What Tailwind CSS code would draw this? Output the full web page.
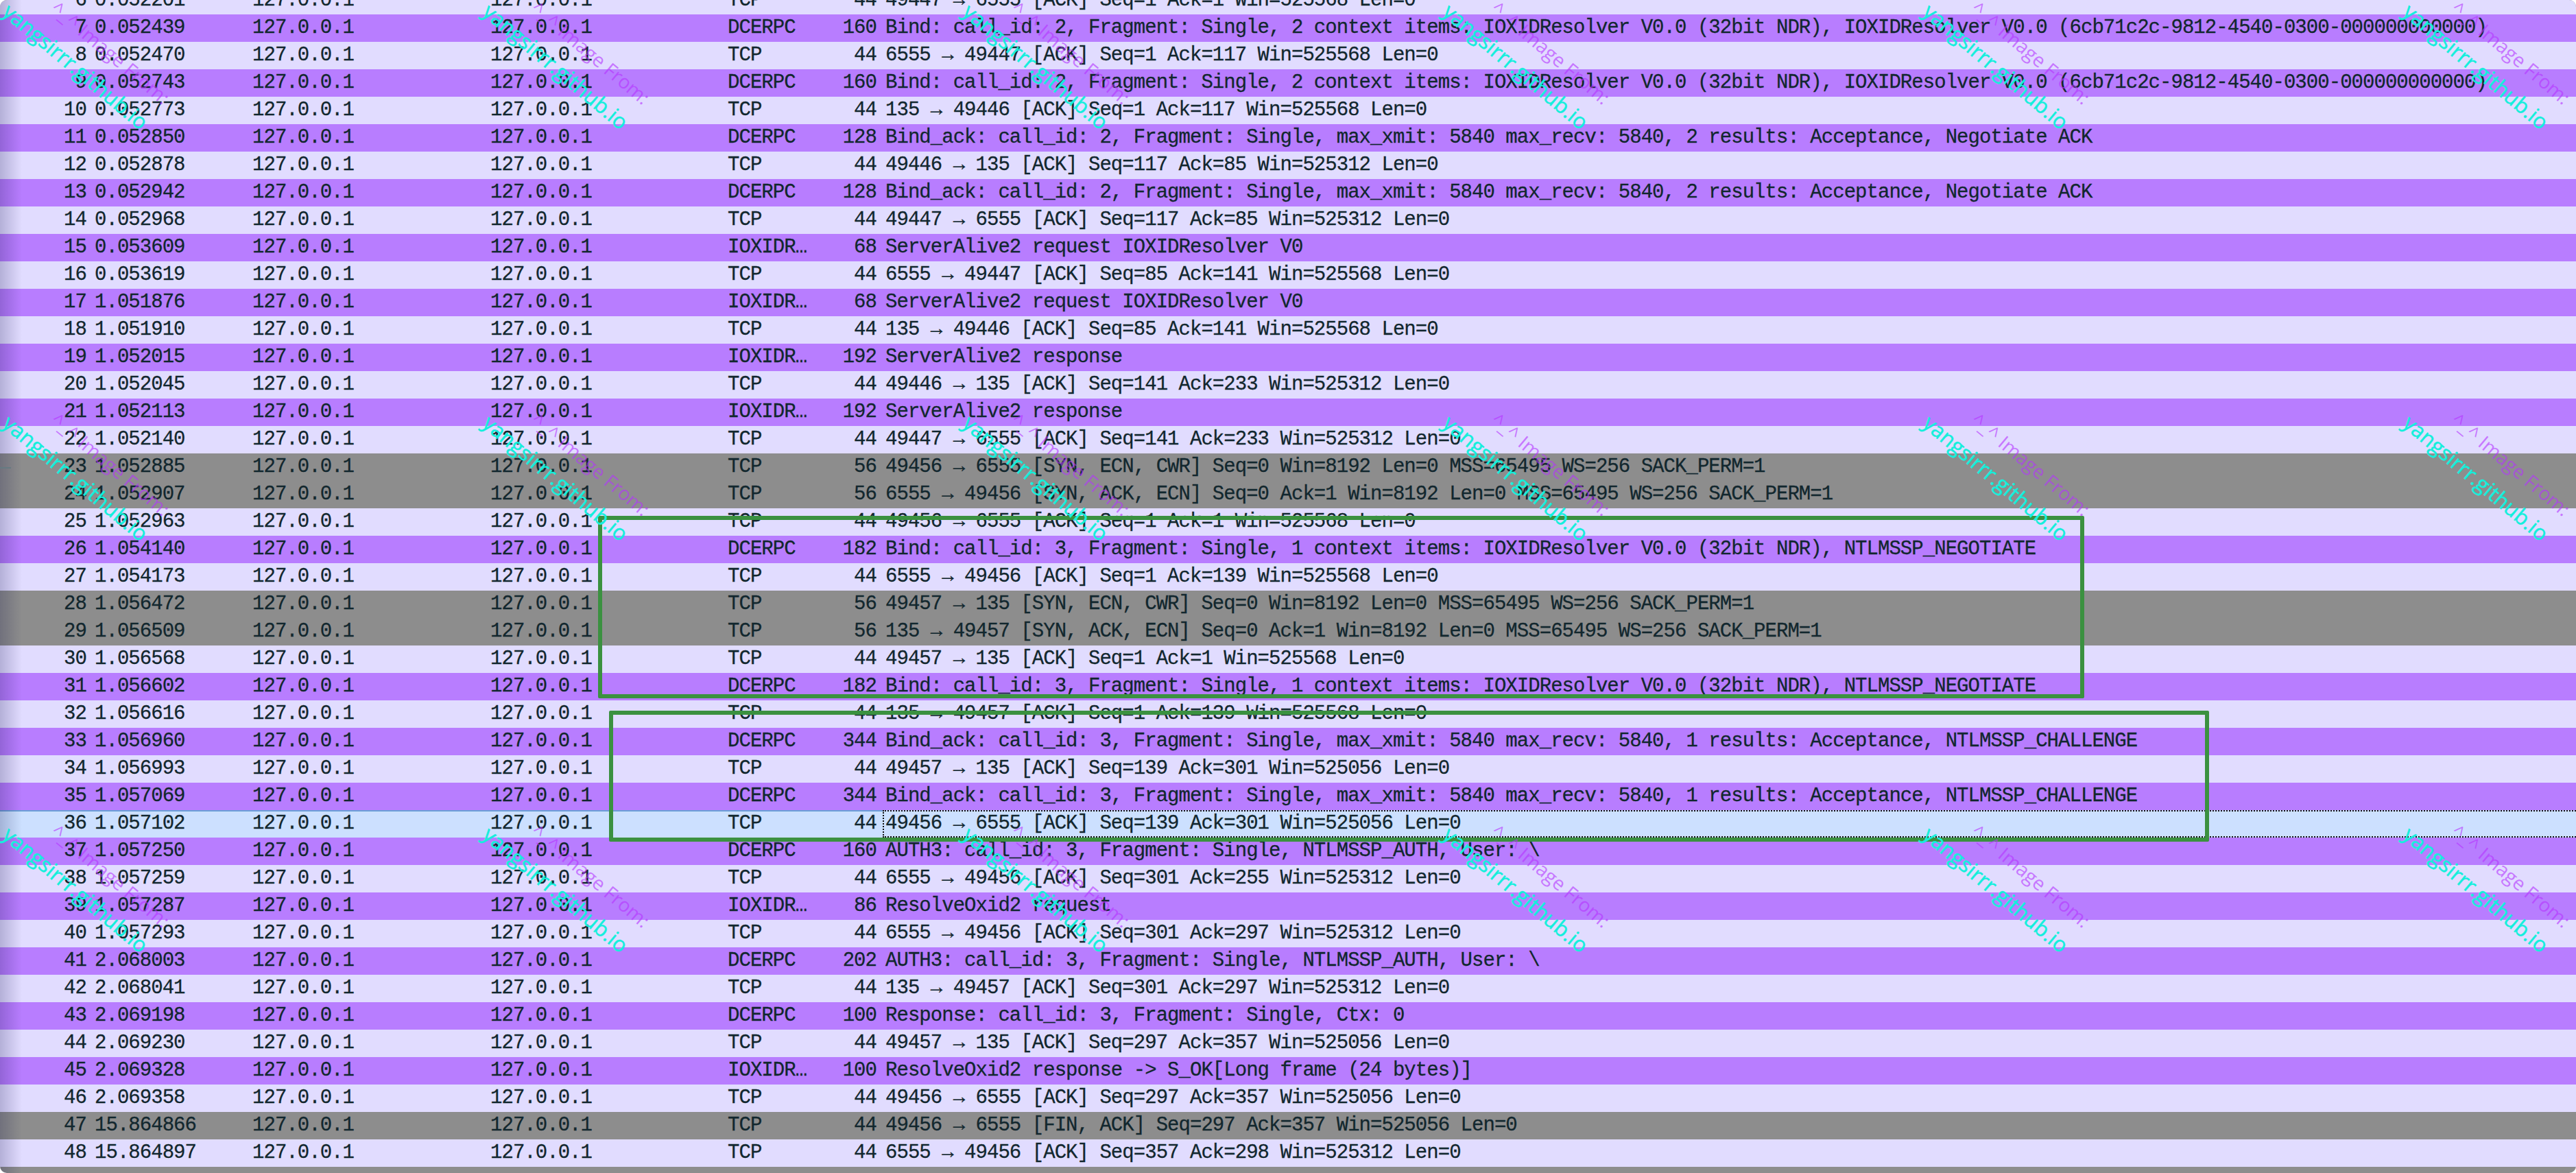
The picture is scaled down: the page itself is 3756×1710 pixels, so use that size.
<!DOCTYPE html>
<html>
<head>
<meta charset="utf-8">
<script src="https://cdn.jsdelivr.net/npm/@tailwindcss/browser@4"></script>
</head>
<body class="bg-white">
<div class="relative w-[3756px] h-[1710px] overflow-hidden rounded-[10px] bg-[#8d8d8d]">
<table class="w-[3756px] table-fixed border-collapse -mt-[19px] bg-[#e1dcff] text-[#12272e] font-['Liberation_Mono',monospace] text-[29px] tracking-[-0.96px] [-webkit-text-stroke:0.3px_#12272e] leading-[40px] whitespace-pre [&_tr]:h-[40px] [&_td]:p-0 [&_td]:overflow-hidden [&_td:nth-child(1)]:text-right [&_td:nth-child(1)]:pr-[6px] [&_td:nth-child(2)]:pl-[6px] [&_td:nth-child(3)]:pl-[6px] [&_td:nth-child(4)]:pl-[6px] [&_td:nth-child(5)]:pl-[6px] [&_td:nth-child(6)]:text-right [&_td:nth-child(6)]:pr-[9px] [&_td:nth-child(7)]:pl-[4px]">
<colgroup><col class="w-[132px]"><col class="w-[230px]"><col class="w-[347px]"><col class="w-[346px]"><col class="w-[160px]"><col class="w-[72px]"><col></colgroup>
<tbody>
<tr><td>6</td><td>0.052201</td><td>127.0.0.1</td><td>127.0.0.1</td><td>TCP</td><td>44</td><td>49447 → 6555 [ACK] Seq=1 Ack=1 Win=525568 Len=0</td></tr>
<tr class="bg-[#b87dff]"><td>7</td><td>0.052439</td><td>127.0.0.1</td><td>127.0.0.1</td><td>DCERPC</td><td>160</td><td>Bind: call_id: 2, Fragment: Single, 2 context items: IOXIDResolver V0.0 (32bit NDR), IOXIDResolver V0.0 (6cb71c2c-9812-4540-0300-000000000000)</td></tr>
<tr><td>8</td><td>0.052470</td><td>127.0.0.1</td><td>127.0.0.1</td><td>TCP</td><td>44</td><td>6555 → 49447 [ACK] Seq=1 Ack=117 Win=525568 Len=0</td></tr>
<tr class="bg-[#b87dff]"><td>9</td><td>0.052743</td><td>127.0.0.1</td><td>127.0.0.1</td><td>DCERPC</td><td>160</td><td>Bind: call_id: 2, Fragment: Single, 2 context items: IOXIDResolver V0.0 (32bit NDR), IOXIDResolver V0.0 (6cb71c2c-9812-4540-0300-000000000000)</td></tr>
<tr><td>10</td><td>0.052773</td><td>127.0.0.1</td><td>127.0.0.1</td><td>TCP</td><td>44</td><td>135 → 49446 [ACK] Seq=1 Ack=117 Win=525568 Len=0</td></tr>
<tr class="bg-[#b87dff]"><td>11</td><td>0.052850</td><td>127.0.0.1</td><td>127.0.0.1</td><td>DCERPC</td><td>128</td><td>Bind_ack: call_id: 2, Fragment: Single, max_xmit: 5840 max_recv: 5840, 2 results: Acceptance, Negotiate ACK</td></tr>
<tr><td>12</td><td>0.052878</td><td>127.0.0.1</td><td>127.0.0.1</td><td>TCP</td><td>44</td><td>49446 → 135 [ACK] Seq=117 Ack=85 Win=525312 Len=0</td></tr>
<tr class="bg-[#b87dff]"><td>13</td><td>0.052942</td><td>127.0.0.1</td><td>127.0.0.1</td><td>DCERPC</td><td>128</td><td>Bind_ack: call_id: 2, Fragment: Single, max_xmit: 5840 max_recv: 5840, 2 results: Acceptance, Negotiate ACK</td></tr>
<tr><td>14</td><td>0.052968</td><td>127.0.0.1</td><td>127.0.0.1</td><td>TCP</td><td>44</td><td>49447 → 6555 [ACK] Seq=117 Ack=85 Win=525312 Len=0</td></tr>
<tr class="bg-[#b87dff]"><td>15</td><td>0.053609</td><td>127.0.0.1</td><td>127.0.0.1</td><td>IOXIDR…</td><td>68</td><td>ServerAlive2 request IOXIDResolver V0</td></tr>
<tr><td>16</td><td>0.053619</td><td>127.0.0.1</td><td>127.0.0.1</td><td>TCP</td><td>44</td><td>6555 → 49447 [ACK] Seq=85 Ack=141 Win=525568 Len=0</td></tr>
<tr class="bg-[#b87dff]"><td>17</td><td>1.051876</td><td>127.0.0.1</td><td>127.0.0.1</td><td>IOXIDR…</td><td>68</td><td>ServerAlive2 request IOXIDResolver V0</td></tr>
<tr><td>18</td><td>1.051910</td><td>127.0.0.1</td><td>127.0.0.1</td><td>TCP</td><td>44</td><td>135 → 49446 [ACK] Seq=85 Ack=141 Win=525568 Len=0</td></tr>
<tr class="bg-[#b87dff]"><td>19</td><td>1.052015</td><td>127.0.0.1</td><td>127.0.0.1</td><td>IOXIDR…</td><td>192</td><td>ServerAlive2 response</td></tr>
<tr><td>20</td><td>1.052045</td><td>127.0.0.1</td><td>127.0.0.1</td><td>TCP</td><td>44</td><td>49446 → 135 [ACK] Seq=141 Ack=233 Win=525312 Len=0</td></tr>
<tr class="bg-[#b87dff]"><td>21</td><td>1.052113</td><td>127.0.0.1</td><td>127.0.0.1</td><td>IOXIDR…</td><td>192</td><td>ServerAlive2 response</td></tr>
<tr><td>22</td><td>1.052140</td><td>127.0.0.1</td><td>127.0.0.1</td><td>TCP</td><td>44</td><td>49447 → 6555 [ACK] Seq=141 Ack=233 Win=525312 Len=0</td></tr>
<tr class="bg-[#8d8d8d]"><td>23</td><td>1.052885</td><td>127.0.0.1</td><td>127.0.0.1</td><td>TCP</td><td>56</td><td>49456 → 6555 [SYN, ECN, CWR] Seq=0 Win=8192 Len=0 MSS=65495 WS=256 SACK_PERM=1</td></tr>
<tr class="bg-[#8d8d8d]"><td>24</td><td>1.052907</td><td>127.0.0.1</td><td>127.0.0.1</td><td>TCP</td><td>56</td><td>6555 → 49456 [SYN, ACK, ECN] Seq=0 Ack=1 Win=8192 Len=0 MSS=65495 WS=256 SACK_PERM=1</td></tr>
<tr><td>25</td><td>1.052963</td><td>127.0.0.1</td><td>127.0.0.1</td><td>TCP</td><td>44</td><td>49456 → 6555 [ACK] Seq=1 Ack=1 Win=525568 Len=0</td></tr>
<tr class="bg-[#b87dff]"><td>26</td><td>1.054140</td><td>127.0.0.1</td><td>127.0.0.1</td><td>DCERPC</td><td>182</td><td>Bind: call_id: 3, Fragment: Single, 1 context items: IOXIDResolver V0.0 (32bit NDR), NTLMSSP_NEGOTIATE</td></tr>
<tr><td>27</td><td>1.054173</td><td>127.0.0.1</td><td>127.0.0.1</td><td>TCP</td><td>44</td><td>6555 → 49456 [ACK] Seq=1 Ack=139 Win=525568 Len=0</td></tr>
<tr class="bg-[#8d8d8d]"><td>28</td><td>1.056472</td><td>127.0.0.1</td><td>127.0.0.1</td><td>TCP</td><td>56</td><td>49457 → 135 [SYN, ECN, CWR] Seq=0 Win=8192 Len=0 MSS=65495 WS=256 SACK_PERM=1</td></tr>
<tr class="bg-[#8d8d8d]"><td>29</td><td>1.056509</td><td>127.0.0.1</td><td>127.0.0.1</td><td>TCP</td><td>56</td><td>135 → 49457 [SYN, ACK, ECN] Seq=0 Ack=1 Win=8192 Len=0 MSS=65495 WS=256 SACK_PERM=1</td></tr>
<tr><td>30</td><td>1.056568</td><td>127.0.0.1</td><td>127.0.0.1</td><td>TCP</td><td>44</td><td>49457 → 135 [ACK] Seq=1 Ack=1 Win=525568 Len=0</td></tr>
<tr class="bg-[#b87dff]"><td>31</td><td>1.056602</td><td>127.0.0.1</td><td>127.0.0.1</td><td>DCERPC</td><td>182</td><td>Bind: call_id: 3, Fragment: Single, 1 context items: IOXIDResolver V0.0 (32bit NDR), NTLMSSP_NEGOTIATE</td></tr>
<tr><td>32</td><td>1.056616</td><td>127.0.0.1</td><td>127.0.0.1</td><td>TCP</td><td>44</td><td>135 → 49457 [ACK] Seq=1 Ack=139 Win=525568 Len=0</td></tr>
<tr class="bg-[#b87dff]"><td>33</td><td>1.056960</td><td>127.0.0.1</td><td>127.0.0.1</td><td>DCERPC</td><td>344</td><td>Bind_ack: call_id: 3, Fragment: Single, max_xmit: 5840 max_recv: 5840, 1 results: Acceptance, NTLMSSP_CHALLENGE</td></tr>
<tr><td>34</td><td>1.056993</td><td>127.0.0.1</td><td>127.0.0.1</td><td>TCP</td><td>44</td><td>49457 → 135 [ACK] Seq=139 Ack=301 Win=525056 Len=0</td></tr>
<tr class="bg-[#b87dff]"><td>35</td><td>1.057069</td><td>127.0.0.1</td><td>127.0.0.1</td><td>DCERPC</td><td>344</td><td>Bind_ack: call_id: 3, Fragment: Single, max_xmit: 5840 max_recv: 5840, 1 results: Acceptance, NTLMSSP_CHALLENGE</td></tr>
<tr class="bg-[#cce0ff]"><td class="shadow-[inset_0_2px_0_#6b9fd6]">36</td><td class="shadow-[inset_0_2px_0_#6b9fd6]">1.057102</td><td class="shadow-[inset_0_2px_0_#6b9fd6]">127.0.0.1</td><td class="shadow-[inset_0_2px_0_#6b9fd6]">127.0.0.1</td><td class="shadow-[inset_0_2px_0_#6b9fd6]">TCP</td><td class="shadow-[inset_0_2px_0_#6b9fd6]">44</td><td class="relative"><div class="absolute inset-0 border-2 border-r-0 border-dotted border-[#111]"></div>49456 → 6555 [ACK] Seq=139 Ack=301 Win=525056 Len=0</td></tr>
<tr class="bg-[#b87dff]"><td>37</td><td>1.057250</td><td>127.0.0.1</td><td>127.0.0.1</td><td>DCERPC</td><td>160</td><td>AUTH3: call_id: 3, Fragment: Single, NTLMSSP_AUTH, User: \</td></tr>
<tr><td>38</td><td>1.057259</td><td>127.0.0.1</td><td>127.0.0.1</td><td>TCP</td><td>44</td><td>6555 → 49456 [ACK] Seq=301 Ack=255 Win=525312 Len=0</td></tr>
<tr class="bg-[#b87dff]"><td>39</td><td>1.057287</td><td>127.0.0.1</td><td>127.0.0.1</td><td>IOXIDR…</td><td>86</td><td>ResolveOxid2 request</td></tr>
<tr><td>40</td><td>1.057293</td><td>127.0.0.1</td><td>127.0.0.1</td><td>TCP</td><td>44</td><td>6555 → 49456 [ACK] Seq=301 Ack=297 Win=525312 Len=0</td></tr>
<tr class="bg-[#b87dff]"><td>41</td><td>2.068003</td><td>127.0.0.1</td><td>127.0.0.1</td><td>DCERPC</td><td>202</td><td>AUTH3: call_id: 3, Fragment: Single, NTLMSSP_AUTH, User: \</td></tr>
<tr><td>42</td><td>2.068041</td><td>127.0.0.1</td><td>127.0.0.1</td><td>TCP</td><td>44</td><td>135 → 49457 [ACK] Seq=301 Ack=297 Win=525312 Len=0</td></tr>
<tr class="bg-[#b87dff]"><td>43</td><td>2.069198</td><td>127.0.0.1</td><td>127.0.0.1</td><td>DCERPC</td><td>100</td><td>Response: call_id: 3, Fragment: Single, Ctx: 0</td></tr>
<tr><td>44</td><td>2.069230</td><td>127.0.0.1</td><td>127.0.0.1</td><td>TCP</td><td>44</td><td>49457 → 135 [ACK] Seq=297 Ack=357 Win=525056 Len=0</td></tr>
<tr class="bg-[#b87dff]"><td>45</td><td>2.069328</td><td>127.0.0.1</td><td>127.0.0.1</td><td>IOXIDR…</td><td>100</td><td>ResolveOxid2 response -&gt; S_OK[Long frame (24 bytes)]</td></tr>
<tr><td>46</td><td>2.069358</td><td>127.0.0.1</td><td>127.0.0.1</td><td>TCP</td><td>44</td><td>49456 → 6555 [ACK] Seq=297 Ack=357 Win=525056 Len=0</td></tr>
<tr class="bg-[#8d8d8d]"><td>47</td><td>15.864866</td><td>127.0.0.1</td><td>127.0.0.1</td><td>TCP</td><td>44</td><td>49456 → 6555 [FIN, ACK] Seq=297 Ack=357 Win=525056 Len=0</td></tr>
<tr><td>48</td><td>15.864897</td><td>127.0.0.1</td><td>127.0.0.1</td><td>TCP</td><td>44</td><td>6555 → 49456 [ACK] Seq=357 Ack=298 Win=525312 Len=0</td></tr>
</tbody>
</table>

<div class="absolute inset-y-0 left-0 w-[32px] bg-linear-to-r from-[#00003a]/20 to-transparent"></div>
<div class="absolute left-0 top-[681px] w-[16px] h-[2px] bg-[#667a82]"></div>

<div class="absolute left-[872px] top-[752px] w-[2167px] h-[266px] border-[6px] border-[#3b9140] rounded-[2px]"></div>
<div class="absolute left-[888px] top-[1036px] w-[2333px] h-[191px] border-[6px] border-[#3b9140] rounded-[2px]"></div>

<div class="absolute inset-0 grid grid-cols-[repeat(6,700px)] grid-rows-[repeat(3,600px)] pointer-events-none font-['Open_Sans',sans-serif] whitespace-pre [&>div]:relative [&_b]:absolute [&_b]:left-[22px] [&_b]:top-[-4px] [&_b]:origin-top-left [&_b]:rotate-[40deg] [&_b]:font-normal [&_b]:text-[31px] [&_b]:leading-[40px] [&_b]:text-[#14efdc] [&_b]:[-webkit-text-stroke:0.5px_#14efdc] [&_i]:absolute [&_i]:left-[92px] [&_i]:top-[-8px] [&_i]:origin-top-left [&_i]:rotate-[40deg] [&_i]:not-italic [&_i]:text-[28px] [&_i]:leading-[40px] [&_i]:text-[#b432ff]/60">
<div><i>^_^ Image From:</i><b>yangsirrr.github.io</b></div><div><i>^_^ Image From:</i><b>yangsirrr.github.io</b></div><div><i>^_^ Image From:</i><b>yangsirrr.github.io</b></div><div><i>^_^ Image From:</i><b>yangsirrr.github.io</b></div><div><i>^_^ Image From:</i><b>yangsirrr.github.io</b></div><div><i>^_^ Image From:</i><b>yangsirrr.github.io</b></div>
<div><i>^_^ Image From:</i><b>yangsirrr.github.io</b></div><div><i>^_^ Image From:</i><b>yangsirrr.github.io</b></div><div><i>^_^ Image From:</i><b>yangsirrr.github.io</b></div><div><i>^_^ Image From:</i><b>yangsirrr.github.io</b></div><div><i>^_^ Image From:</i><b>yangsirrr.github.io</b></div><div><i>^_^ Image From:</i><b>yangsirrr.github.io</b></div>
<div><i>^_^ Image From:</i><b>yangsirrr.github.io</b></div><div><i>^_^ Image From:</i><b>yangsirrr.github.io</b></div><div><i>^_^ Image From:</i><b>yangsirrr.github.io</b></div><div><i>^_^ Image From:</i><b>yangsirrr.github.io</b></div><div><i>^_^ Image From:</i><b>yangsirrr.github.io</b></div><div><i>^_^ Image From:</i><b>yangsirrr.github.io</b></div>
</div>
</div>
</body>
</html>
